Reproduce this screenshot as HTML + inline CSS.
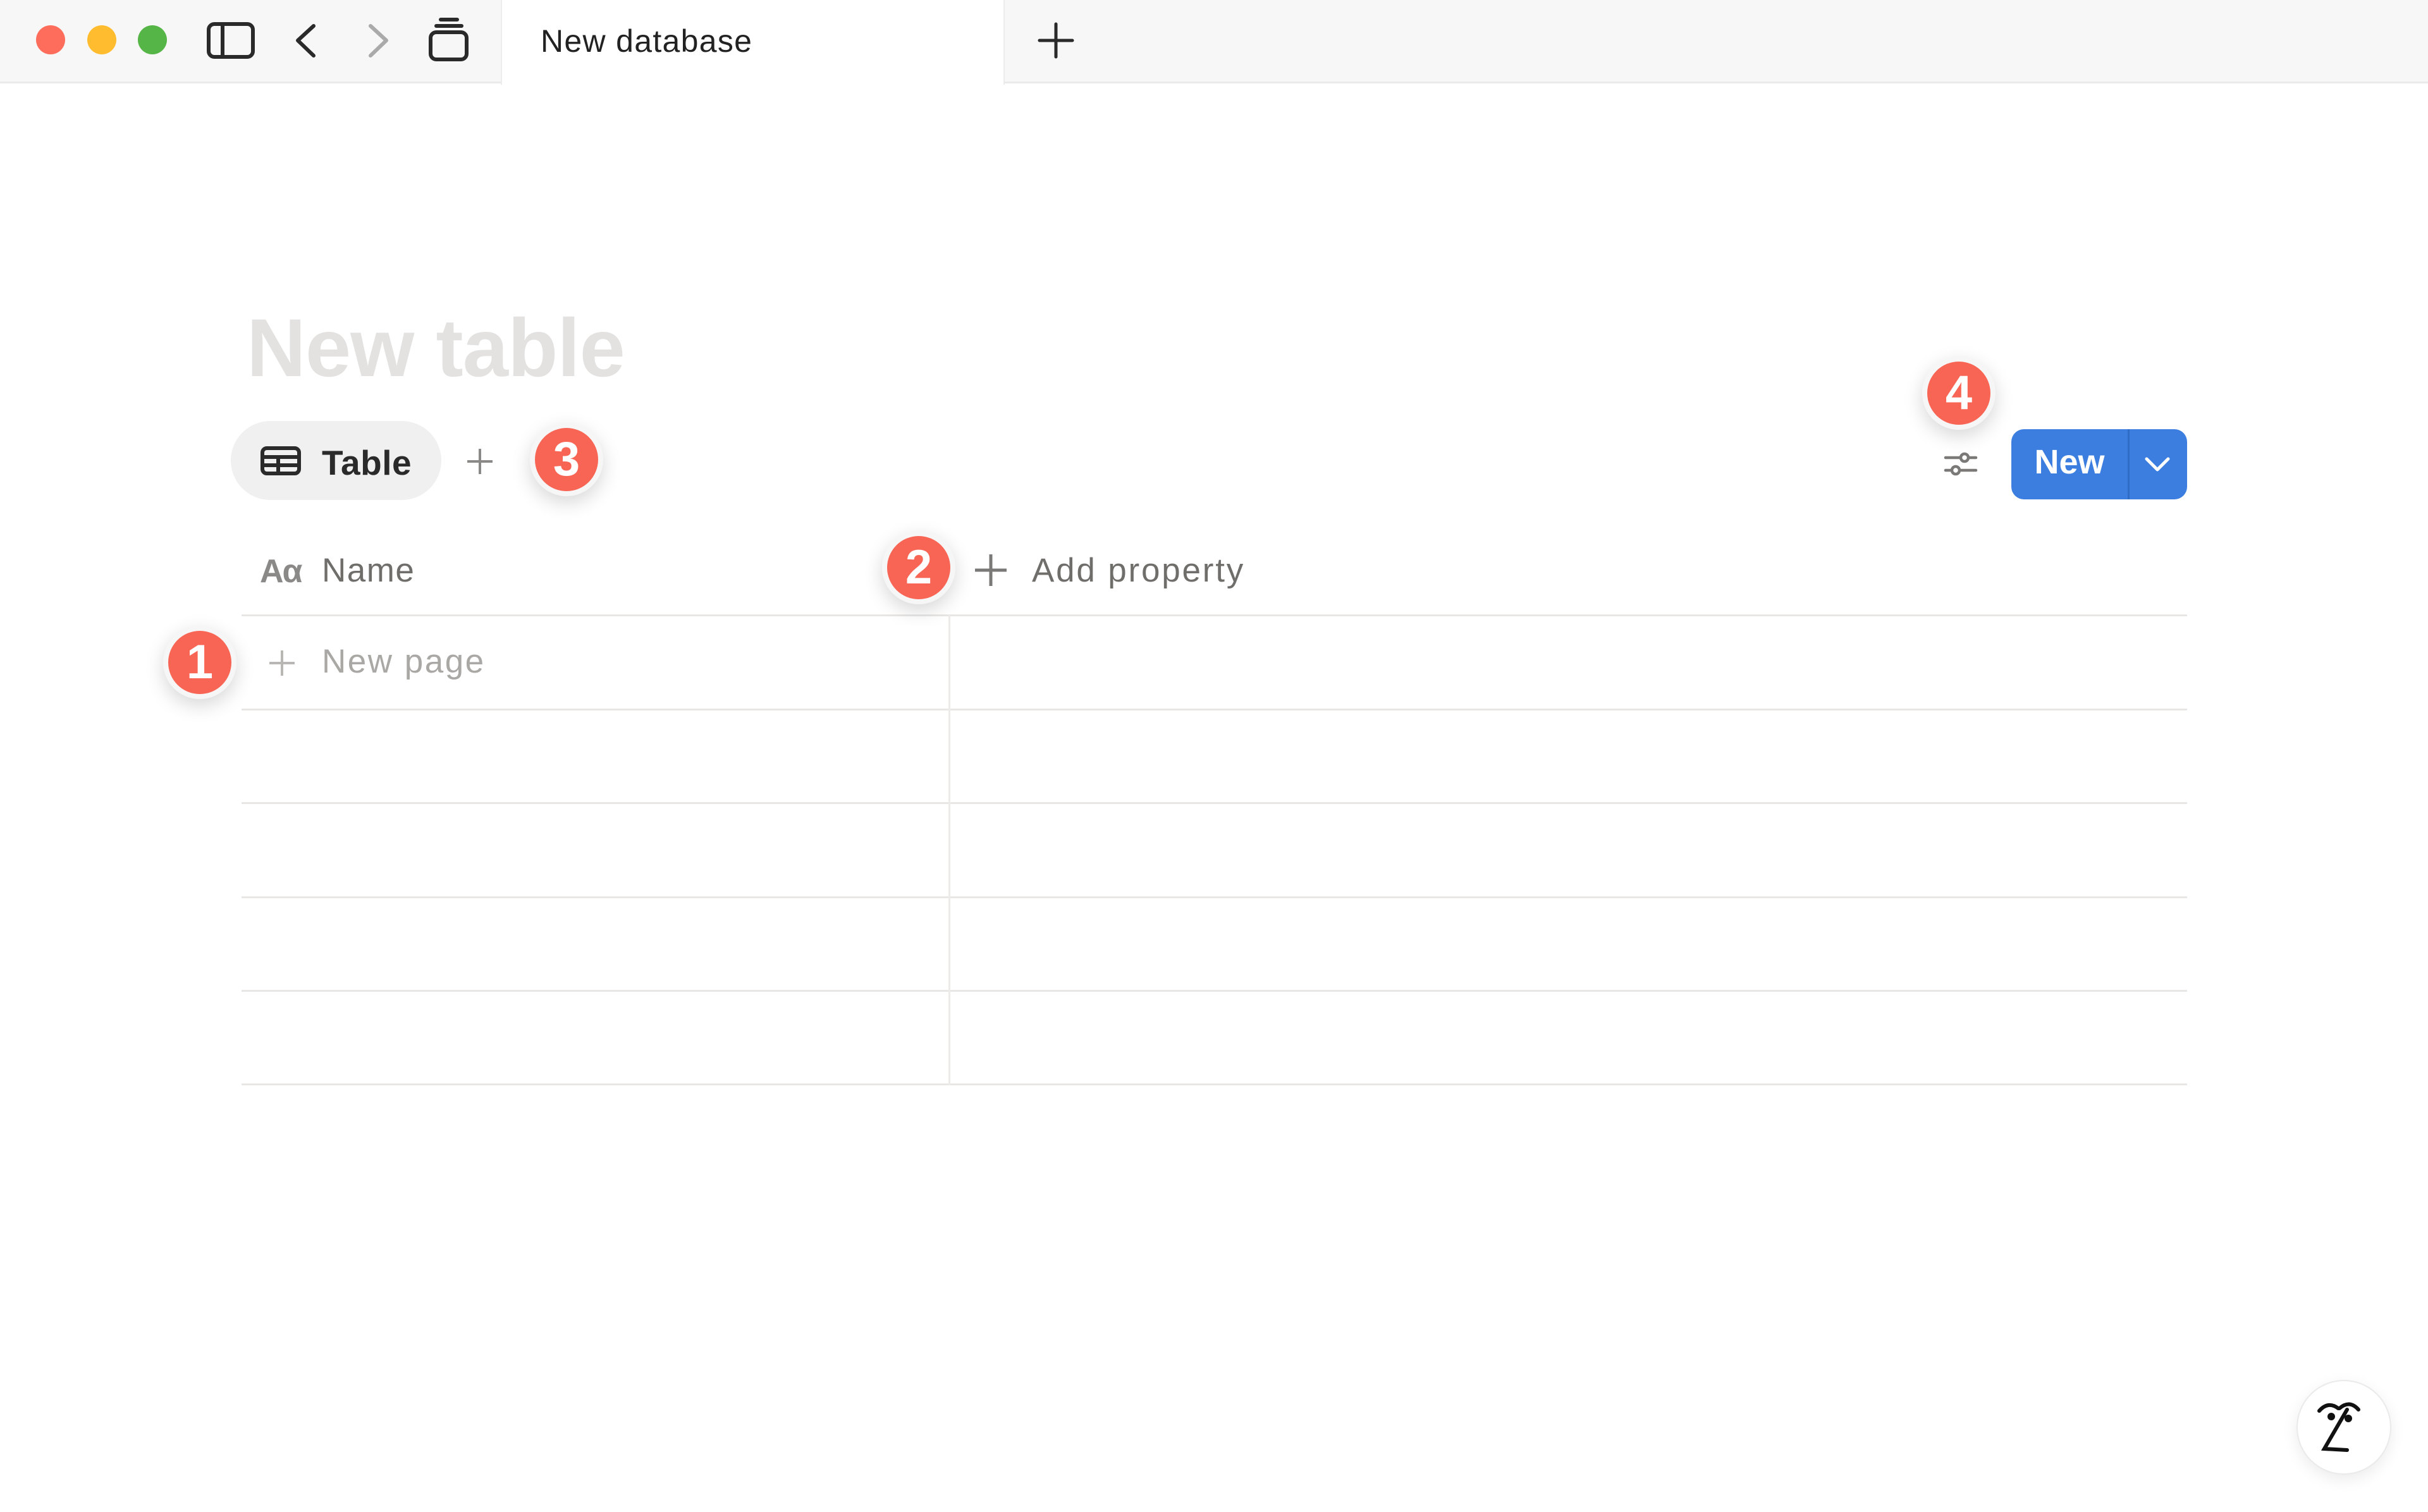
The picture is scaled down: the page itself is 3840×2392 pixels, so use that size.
<!DOCTYPE html>
<html><head><meta charset="utf-8"><style>
*{margin:0;padding:0;box-sizing:border-box}
html,body{width:3840px;height:2392px;background:#fff;overflow:hidden;font-family:"Liberation Sans",sans-serif}
.abs{position:absolute}
.bar{left:0;top:0;width:3840px;height:132px;background:#f8f7f7;border-bottom:3px solid #ebeaea}
.tab{left:792px;top:0;width:797px;height:134px;background:#fff;border-left:2px solid #ececec;border-right:2px solid #ececec}
.dot{width:46px;height:46px;border-radius:50%;top:40px}
.badge{width:116px;height:116px;border-radius:50%;background:#f7f6f6;box-shadow:0 10px 30px rgba(0,0,0,.16)}
.badge div{position:absolute;left:8px;top:8px;width:100px;height:100px;border-radius:50%;background:#f96555;color:#fff;font-size:76px;font-weight:bold;text-align:center;line-height:100px}
.hl{height:3px;background:#e8e7e6;left:382px;width:3077px}
</style></head><body>
<div class="abs bar"></div>
<div class="abs tab"></div>
<div class="abs dot" style="left:57px;background:#fe6d5b"></div>
<div class="abs dot" style="left:138px;background:#febc2e"></div>
<div class="abs dot" style="left:218px;background:#55b546"></div>
<svg class="abs" style="left:0;top:0" width="800" height="132">
<g fill="none" stroke="#2a2a2a" stroke-width="6" stroke-linecap="round" stroke-linejoin="round">
<rect x="330" y="38" width="70" height="52" rx="9"/><line x1="352" y1="38" x2="352" y2="90"/>
<polyline points="496,41 471,64 496,88"/>
<polyline points="586,41 611,64 586,88" stroke="#aaa"/>
<rect x="681" y="51" width="57" height="43" rx="9"/><line x1="690" y1="41" x2="730" y2="41"/><line x1="697" y1="31" x2="723" y2="31"/>
</g></svg>
<div class="abs" style="left:855px;top:36px;font-size:50px;color:#222;letter-spacing:1.3px">New database</div>
<svg class="abs" style="left:1640px;top:34px" width="60" height="60"><g stroke="#2a2a2a" stroke-width="5" stroke-linecap="round"><line x1="30" y1="4" x2="30" y2="56"/><line x1="4" y1="30" x2="56" y2="30"/></g></svg>

<div class="abs" style="left:390px;top:475px;font-size:130px;font-weight:bold;color:#e3e2e1;letter-spacing:-1px">New table</div>

<div class="abs" style="left:365px;top:666px;width:333px;height:125px;border-radius:63px;background:#f1f0f0"></div>
<svg class="abs" style="left:412px;top:706px" width="64" height="46"><g fill="none" stroke="#2a2a2a" stroke-width="6"><rect x="3" y="3" width="58" height="40" rx="7"/><line x1="3" y1="17" x2="61" y2="17"/><line x1="3" y1="30" x2="61" y2="30"/><line x1="28" y1="17" x2="28" y2="43"/></g></svg>
<div class="abs" style="left:509px;top:700px;font-size:55px;font-weight:bold;color:#2a2a2a;letter-spacing:0.5px">Table</div>
<svg class="abs" style="left:737px;top:708px" width="44" height="44"><g stroke="#8a8987" stroke-width="4"><line x1="22" y1="2" x2="22" y2="42"/><line x1="2" y1="22" x2="42" y2="22"/></g></svg>

<svg class="abs" style="left:3074px;top:713px" width="54" height="42"><g fill="none" stroke="#7a7977" stroke-width="4.5" stroke-linecap="round"><line x1="3" y1="11" x2="51" y2="11"/><line x1="3" y1="31" x2="51" y2="31"/><circle cx="33" cy="11" r="6" fill="#fff"/><circle cx="19" cy="31" r="6" fill="#fff"/></g></svg>
<div class="abs" style="left:3181px;top:679px;width:278px;height:111px;border-radius:20px;background:#3b7ee0"></div>
<div class="abs" style="left:3365px;top:679px;width:3px;height:111px;background:#2f6cc6"></div>
<div class="abs" style="left:3181px;top:700px;width:184px;text-align:center;font-size:54px;font-weight:bold;color:#fff">New</div>
<svg class="abs" style="left:3389px;top:718px" width="46" height="32"><polyline points="6,8 23,25 40,8" fill="none" stroke="#fff" stroke-width="5" stroke-linecap="round" stroke-linejoin="round"/></svg>

<div class="abs" style="left:411px;top:874px;font-size:52px;font-weight:bold;color:#8a8987;letter-spacing:-2px">Aα</div>
<div class="abs" style="left:509px;top:872px;font-size:53px;color:#6f6e6b;letter-spacing:1.5px">Name</div>
<svg class="abs" style="left:1540px;top:875px" width="54" height="54"><g stroke="#7a7977" stroke-width="5"><line x1="27" y1="2" x2="27" y2="52"/><line x1="2" y1="27" x2="52" y2="27"/></g></svg>
<div class="abs" style="left:1632px;top:872px;font-size:53px;color:#6f6e6b;letter-spacing:2.8px">Add property</div>

<div class="abs hl" style="top:972px"></div>
<div class="abs hl" style="top:1121px"></div>
<div class="abs hl" style="top:1269px"></div>
<div class="abs hl" style="top:1418px"></div>
<div class="abs hl" style="top:1566px"></div>
<div class="abs hl" style="top:1714px"></div>
<div class="abs" style="left:1500px;top:972px;width:3px;height:745px;background:#ecebea"></div>

<svg class="abs" style="left:424px;top:1027px" width="44" height="44"><g stroke="#b8b7b4" stroke-width="4"><line x1="22" y1="2" x2="22" y2="42"/><line x1="2" y1="22" x2="42" y2="22"/></g></svg>
<div class="abs" style="left:509px;top:1016px;font-size:53px;color:#a9a8a5;letter-spacing:2.5px">New page</div>

<div class="abs badge" style="left:258px;top:990px"><div>1</div></div>
<div class="abs badge" style="left:1395px;top:840px"><div>2</div></div>
<div class="abs badge" style="left:838px;top:669px"><div>3</div></div>
<div class="abs badge" style="left:3040px;top:564px"><div>4</div></div>

<div class="abs" style="left:3632px;top:2183px;width:150px;height:150px;border-radius:50%;background:#fff;border:2px solid #ebeaea;box-shadow:0 8px 24px rgba(0,0,0,.08)"></div>
<svg class="abs" style="left:3662px;top:2210px" width="90" height="100"><g fill="none" stroke="#111" stroke-width="6" stroke-linecap="round"><path d="M6 22 Q20 6 36 18"/><path d="M38 18 Q54 4 68 20"/><path d="M50 20 L14 82 L50 84"/></g><circle cx="25" cy="31" r="6" fill="#111"/><circle cx="52" cy="34" r="6" fill="#111"/></svg>
</body></html>
